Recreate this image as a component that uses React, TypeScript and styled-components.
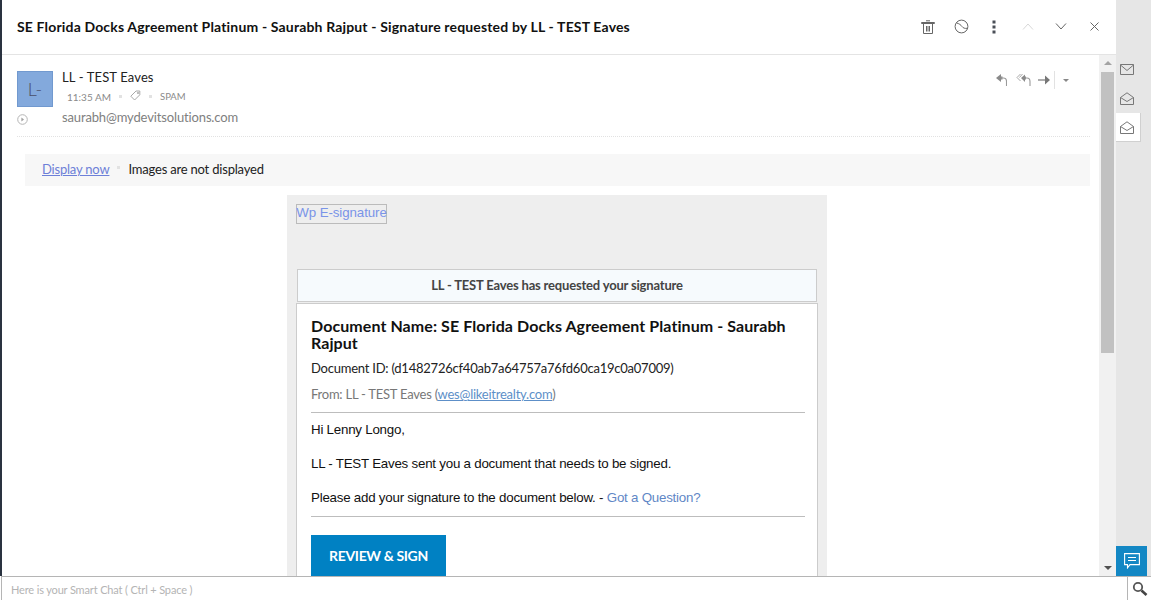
import React from 'react'
import styled, { createGlobalStyle } from 'styled-components'

const GlobalStyle = createGlobalStyle`
  html, body { margin: 0; padding: 0; height: 100%; overflow: hidden; }
  body { font-family: Lato, "Liberation Sans", sans-serif; background: #fff; }
  * { box-sizing: border-box; }
`

const IconSvg = ({ w = 16, h = 16, children }: { w?: number; h?: number; children: React.ReactNode }) => (
  <svg width={w} height={h} viewBox={`0 0 ${w} ${h}`} fill="none" stroke="currentColor" strokeWidth="1">
    {children}
  </svg>
)

const TrashIcon = () => (
  <IconSvg w={14} h={14}>
    <path d="M.5 3.500h13M.5 3.500V2.500h13v1M2.500 3.500V13.500h9V3.500M5 .8h4M5.500 6v5.500M7 6v5.500M8.500 6v5.500" />
  </IconSvg>
)
const BlockIcon = () => (
  <IconSvg w={15} h={15}>
    <circle cx="7.5" cy="7.5" r="6.4" />
    <path d="M2.6 4C5 4.500 7 6 8 7.500s3 2.200 5 1.800" />
  </IconSvg>
)
const DotsIcon = () => (
  <svg width="4" height="14" viewBox="0 0 4 14" fill="#4a4f57">
    <rect x="0.5" y="0.5" width="3" height="3" />
    <rect x="0.5" y="5.5" width="3" height="3" />
    <rect x="0.5" y="10.5" width="3" height="3" />
  </svg>
)
const ChevronIcon = ({ up }: { up?: boolean }) => (
  <IconSvg w={12} h={7}>
    <path d={up ? 'M1 6.5L6 1l5 5.5' : 'M1 .5L6 6l5-5.5'} />
  </IconSvg>
)
const CloseIcon = () => (
  <IconSvg w={9} h={9}>
    <path d="M.5.5l8 8M8.5.5l-8 8" />
  </IconSvg>
)
const ReplyIcon = () => (
  <svg width="11" height="14" viewBox="0 0 11 14" fill="none">
    <path d="M5 1L0 5l5 4V6.500h1.500V3.500H5z" fill="#8a8a8a" />
    <path d="M5 5h2.500c2 0 3 1.500 3 3.500V13" stroke="#9a9a9a" strokeWidth="1.1" />
  </svg>
)
const ReplyAllIcon = () => (
  <svg width="15" height="14" viewBox="0 0 15 14" fill="none">
    <path d="M4.500 1L1 4.500 4.500 8M6.500 1L3.500 4.500" stroke="#a8a8a8" strokeWidth="1" />
    <path d="M9 1.500L5 5l4 4V6.500h1V3.500H9z" fill="#8a8a8a" />
    <path d="M9 5h2c2 0 3 1.500 3 3.500V13" stroke="#9a9a9a" strokeWidth="1.1" />
  </svg>
)
const ForwardIcon = () => (
  <svg width="12" height="10" viewBox="0 0 12 10" fill="none">
    <path d="M0 5h8" stroke="#777" strokeWidth="1.2" />
    <path d="M7 .5L12 5 7 9.500z" fill="#777" />
  </svg>
)
const TagIcon = () => (
  <IconSvg w={11} h={11}>
    <path d="M.8 6.200L6 1h3.800v3.800L4.600 10z" />
    <circle cx="8" cy="3" r=".7" />
  </IconSvg>
)
const PlayCircleIcon = () => (
  <svg width="11" height="11" viewBox="0 0 11 11" fill="none">
    <circle cx="5.500" cy="5.500" r="4.800" stroke="#b5b5b5" />
    <path d="M4.400 3.500l2.600 2-2.600 2z" fill="#a0a0a0" />
  </svg>
)
const ClosedMailIcon = () => (
  <IconSvg w={14} h={12}>
    <path d="M.5.5h13v10H.5zM.5 1L7 6.500 13.500 1" />
  </IconSvg>
)
const OpenMailIcon = () => (
  <IconSvg w={14} h={13}>
    <path d="M.5 5.500L7 .8l6.500 4.700V12.500H.5zM.5 5.500L7 9.500l6.500-4" />
  </IconSvg>
)
const ChatIcon = () => (
  <svg width="16" height="16" viewBox="0 0 16 16" fill="none" stroke="#fff" strokeWidth="1.1">
    <path d="M.6.6h14.800v11H6L3.500 14.800V11.600H.6z" />
    <path d="M4 4.500h8M4 7.500h8" />
  </svg>
)
const SearchIcon = () => (
  <svg width="16" height="16" viewBox="0 0 16 16" fill="none">
    <circle cx="6" cy="6" r="4.200" stroke="#555" strokeWidth="1.800" />
    <path d="M9.500 9.500l5 4.500" stroke="#444" strokeWidth="2.600" />
  </svg>
)

export default function App() {
  return (
    <>
      <GlobalStyle />
      <Page>
        <Top>
          <LeftEdge />
          <Main>
            <Header>
              <Subject>SE Florida Docks Agreement Platinum - Saurabh Rajput - Signature requested by LL - TEST Eaves</Subject>
              <HeaderActions>
                <HeaderAction><TrashIcon /></HeaderAction>
                <HeaderAction><BlockIcon /></HeaderAction>
                <HeaderAction><DotsIcon /></HeaderAction>
                <HeaderAction $tone="#d8d8d8"><ChevronIcon up /></HeaderAction>
                <HeaderAction><ChevronIcon /></HeaderAction>
                <HeaderAction><CloseIcon /></HeaderAction>
              </HeaderActions>
            </Header>
            <Body>
              <Content>
                <SenderRow>
                  <AvatarCol>
                    <Avatar>L-</Avatar>
                    <ExpandToggle><PlayCircleIcon /></ExpandToggle>
                  </AvatarCol>
                  <SenderInfo>
                    <SenderName>LL - TEST Eaves</SenderName>
                    <MetaLine>
                      <span>11:35 AM</span>
                      <MetaDot />
                      <TagWrap><TagIcon /></TagWrap>
                      <MetaDot />
                      <SpamLabel>SPAM</SpamLabel>
                    </MetaLine>
                    <SenderEmail>saurabh@mydevitsolutions.com</SenderEmail>
                  </SenderInfo>
                  <MailActions>
                    <ReplyIcon />
                    <ReplyAllSlot><ReplyAllIcon /></ReplyAllSlot>
                    <ForwardSlot><ForwardIcon /></ForwardSlot>
                    <ActionDivider />
                    <Caret />
                  </MailActions>
                </SenderRow>
                <Notice>
                  <NoticeLink href="#">Display now</NoticeLink>
                  <NoticeDot />
                  <span>Images are not displayed</span>
                </Notice>
                <MailFrame>
                  <LogoBox>Wp E-signature</LogoBox>
                  <Banner>LL - TEST Eaves has requested your signature</Banner>
                  <Card>
                    <DocTitle>Document Name: SE Florida Docks Agreement Platinum - Saurabh Rajput</DocTitle>
                    <DocLine>Document ID: (d1482726cf40ab7a64757a76fd60ca19c0a07009)</DocLine>
                    <FromLine>From: LL - TEST Eaves (<a href="#">wes@likeitrealty.com</a>)</FromLine>
                    <Rule />
                    <Para>Hi Lenny Longo,</Para>
                    <Para>LL - TEST Eaves sent you a document that needs to be signed.</Para>
                    <Para>Please add your signature to the document below. - <QuestionLink href="#">Got a Question?</QuestionLink></Para>
                    <Rule />
                    <SignButton>REVIEW &amp; SIGN</SignButton>
                  </Card>
                </MailFrame>
              </Content>
              <ScrollTrack>
                <ArrowUp />
                <Thumb />
                <ArrowDown />
              </ScrollTrack>
            </Body>
          </Main>
          <Rail>
            <RailTab><ClosedMailIcon /></RailTab>
            <RailTab><OpenMailIcon /></RailTab>
            <RailTab $active><OpenMailIcon /></RailTab>
            <ChatButton><ChatIcon /></ChatButton>
          </Rail>
        </Top>
        <ChatBar>
          <ChatHint>Here is your Smart Chat ( Ctrl + Space )</ChatHint>
          <SearchBox><SearchIcon /></SearchBox>
        </ChatBar>
      </Page>
    </>
  )
}

// styled components
const Page = styled.div`
  display: flex;
  flex-direction: column;
  width: 1151px;
  height: 600px;
  overflow: hidden;
`

const Top = styled.div`
  display: flex;
  height: 576px;
`

const LeftEdge = styled.div`
  width: 2px;
  background: #2a3340;
`

const Main = styled.div`
  display: flex;
  flex-direction: column;
  width: 1114px;
  background: #fff;
`

const Header = styled.header`
  display: flex;
  align-items: center;
  justify-content: space-between;
  height: 55px;
  padding: 0 0 1px 15px;
  border-bottom: 1px solid #e4e4e4;
`

const Subject = styled.h1`
  margin: 0;
  font-size: 14px;
  font-weight: 700;
  letter-spacing: 0.16px;
  color: #111;
  white-space: nowrap;
`

const HeaderActions = styled.div`
  display: flex;
  margin-right: 5px;
`

const HeaderAction = styled.span<{ $tone?: string }>`
  display: flex;
  align-items: center;
  justify-content: center;
  width: 33.300px;
  height: 16px;
  color: ${({ $tone }) => $tone || '#666'};
`

const Body = styled.div`
  display: flex;
  flex: 1;
  min-height: 0;
`

const Content = styled.div`
  flex: 1;
  min-width: 0;
  overflow: hidden;
  padding: 0 9px 0 15px;
`

const SenderRow = styled.div`
  display: flex;
  height: 82px;
  padding-top: 16px;
  border-bottom: 1px dotted #e2e2e2;
`

const AvatarCol = styled.div`
  display: flex;
  flex-direction: column;
  width: 45px;
`

const Avatar = styled.div`
  display: flex;
  align-items: center;
  justify-content: center;
  width: 36px;
  height: 36px;
  background: #83a9dc;
  border: 1px solid #7199cf;
  font-size: 18px;
  font-weight: 300;
  color: #4a4f68;
`

const ExpandToggle = styled.span`
  display: flex;
  margin-top: 7px;
`

const SenderInfo = styled.div`
  display: flex;
  flex-direction: column;
  flex: 1;
`

const SenderName = styled.div`
  height: 15px;
  font-size: 13px;
  line-height: 13px;
  letter-spacing: 0.13px;
  color: #222;
`

const MetaLine = styled.div`
  display: flex;
  align-items: center;
  height: 17px;
  margin-top: 2px;
  padding-left: 5px;
  font-size: 10px;
  color: #8a8a8a;
`

const MetaDot = styled.i`
  width: 3px;
  height: 3px;
  margin: 0 8px;
  background: #e2e2e2;
`

const TagWrap = styled.span`
  display: flex;
  margin: 0 0 2px 0;
  color: #a8a8a8;
`

const SpamLabel = styled.span`
  font-size: 9.500px;
`

const SenderEmail = styled.div`
  margin-top: 4px;
  font-size: 13px;
  line-height: 16px;
  letter-spacing: -0.14px;
  color: #808080;
`

const MailActions = styled.div`
  display: flex;
  align-items: center;
  height: 18px;
  margin: 0 21px 0 0;
`

const ReplyAllSlot = styled.span`
  display: flex;
  margin-left: 9px;
`

const ForwardSlot = styled.span`
  display: flex;
  margin-left: 7px;
`

const ActionDivider = styled.i`
  width: 1px;
  height: 18px;
  margin-left: 4px;
  background: #e2e2e2;
`

const Caret = styled.i`
  width: 0;
  height: 0;
  margin-left: 8px;
  border-left: 3px solid transparent;
  border-right: 3px solid transparent;
  border-top: 3px solid #888;
`

const Notice = styled.div`
  display: flex;
  align-items: center;
  height: 32px;
  margin: 17px 0 9px 8px;
  padding: 0 0 2px 17px;
  background: #f7f7f7;
  font-size: 13px;
  letter-spacing: -0.2px;
  color: #222;
`

const NoticeLink = styled.a`
  color: #6d80d8;
`

const NoticeDot = styled.i`
  width: 3px;
  height: 3px;
  margin: 0 8px 4px;
  background: #e2e2e2;
`

const MailFrame = styled.div`
  width: 540px;
  margin-left: 270px;
  padding: 9px 9px 0;
  background: #eee;
`

const LogoBox = styled.div`
  display: flex;
  align-items: center;
  justify-content: center;
  width: 91px;
  height: 20px;
  padding-bottom: 3px;
  border: 1px solid #bbb;
  font-family: "Liberation Sans", Arial, sans-serif;
  font-size: 13.330px;
  letter-spacing: -0.1px;
  white-space: nowrap;
  color: #7a94e8;
`

const Banner = styled.div`
  display: flex;
  align-items: center;
  justify-content: center;
  width: 520px;
  height: 33px;
  margin: 45px 0 1px 1px;
  padding-bottom: 1px;
  background: #f6fafd;
  border: 1px solid #ccc;
  font-size: 13px;
  font-weight: 700;
  letter-spacing: -0.18px;
  color: #444;
`

const Card = styled.div`
  width: 522px;
  padding: 13px 12px 0 14px;
  background: #fff;
  border: 1px solid #ccc;
  border-bottom: 0;
`

const DocTitle = styled.h2`
  margin: 0;
  font-size: 16px;
  font-weight: 700;
  line-height: 17px;
  letter-spacing: 0.08px;
  color: #111;
`

const DocLine = styled.div`
  margin-top: 9px;
  font-size: 13px;
  line-height: 17px;
  letter-spacing: -0.23px;
  color: #222;
`

const FromLine = styled.div`
  margin-top: 9px;
  font-size: 13px;
  line-height: 17px;
  letter-spacing: -0.24px;
  color: #777;
  & a { color: #5d8fc8; }
`

const Rule = styled.hr`
  height: 1px;
  margin: 9px 0 0;
  border: 0;
  background: #bdbdbd;
`

const Para = styled.p`
  margin: 8px 0 17px;
  font-family: "Liberation Sans", Arial, sans-serif;
  font-size: 13.330px;
  line-height: 17px;
  letter-spacing: -0.23px;
  color: #111;
  & + & { margin-top: 0; }
  & + ${Rule} { margin-top: -7px; }
`

const QuestionLink = styled.a`
  color: #5f87c6;
  text-decoration: none;
`

const SignButton = styled.div`
  display: flex;
  align-items: center;
  justify-content: center;
  width: 135px;
  height: 42px;
  margin-top: 18px;
  padding-bottom: 2px;
  background: #0081c3;
  font-size: 14px;
  font-weight: 700;
  letter-spacing: -0.35px;
  color: #fff;
`

const ScrollTrack = styled.div`
  display: flex;
  flex-direction: column;
  align-items: center;
  width: 17px;
  padding: 0 2px;
  background: #f1f1f1;
`

const ArrowUp = styled.i`
  width: 0;
  height: 0;
  margin-top: 6px;
  border-left: 4px solid transparent;
  border-right: 4px solid transparent;
  border-bottom: 4px solid #a3a3a3;
`

const Thumb = styled.div`
  width: 13px;
  height: 281px;
  margin-top: 7px;
  background: #c1c1c1;
`

const ArrowDown = styled.i`
  width: 0;
  height: 0;
  margin-top: auto;
  margin-bottom: 6px;
  border-left: 4px solid transparent;
  border-right: 4px solid transparent;
  border-top: 4px solid #505050;
`

const Rail = styled.aside`
  display: flex;
  flex-direction: column;
  flex: 1;
  padding-top: 55px;
  background: #e6e6e6;
`

const RailTab = styled.div<{ $active?: boolean }>`
  display: flex;
  align-items: center;
  justify-content: center;
  width: 25px;
  height: 29px;
  padding-right: 3px;
  color: #777;
  background: ${({ $active }) => ($active ? '#fff' : 'transparent')};
  border-right: ${({ $active }) => ($active ? '1px solid #d0d0d0' : '0')};
  border-bottom: ${({ $active }) => ($active ? '1px solid #d0d0d0' : '0')};
`

const ChatButton = styled.div`
  display: flex;
  align-items: center;
  justify-content: center;
  width: 31px;
  height: 30px;
  margin-top: auto;
  background: #1387c4;
`

const ChatBar = styled.div`
  display: flex;
  height: 24px;
  margin-left: 1px;
  border-top: 1px solid #b5b5b5;
  border-left: 1px solid #b5b5b5;
  background: #fff;
`

const ChatHint = styled.div`
  flex: 1;
  padding-left: 9px;
  font-size: 11px;
  line-height: 26px;
  letter-spacing: -0.15px;
  color: #b4b4b4;
`

const SearchBox = styled.div`
  display: flex;
  align-items: center;
  justify-content: center;
  width: 24px;
  border-left: 1px solid #b5b5b5;
`
